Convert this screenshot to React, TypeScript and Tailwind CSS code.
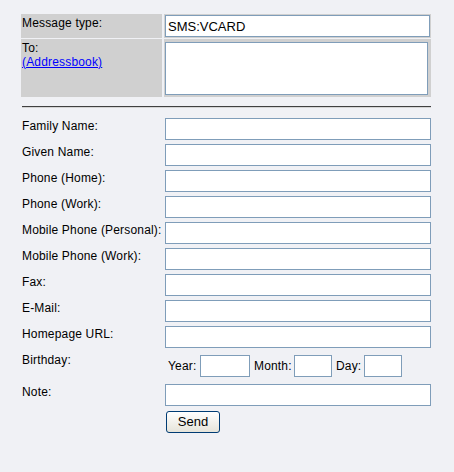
import { useState } from "react"

const fields = [
  "Family Name:",
  "Given Name:",
  "Phone (Home):",
  "Phone (Work):",
  "Mobile Phone (Personal):",
  "Mobile Phone (Work):",
  "Fax:",
  "E-Mail:",
  "Homepage URL:",
]

const inputCls =
  "h-[22px] border border-[#7f9db9] bg-white px-[2px] text-[13px] tracking-normal text-black outline-none"

export default function App() {
  const [values, setValues] = useState<Record<string, string>>({})

  return (
    <div
      className="min-h-screen w-[454px] bg-[#f0f1f5] pl-[21px] pt-[14px] text-[12px] leading-[14px] tracking-[0.17px] text-black"
      style={{ fontFamily: '"Liberation Sans", Arial, sans-serif' }}
    >
      <div className="w-[410px]">
        {/* header table */}
        <div className="flex gap-[2px]">
          <div className="h-[24px] w-[141px] bg-[#d0d0d0] pl-px pt-[2px]">Message type:</div>
          <div className="h-[24px] w-[267px] bg-[#d0d0d0] p-px">
            <input className={`${inputCls} w-[265px]`} defaultValue="SMS:VCARD" />
          </div>
        </div>
        <div className="mt-px flex gap-[2px]">
          <div className="h-[58px] w-[141px] bg-[#d0d0d0] pl-px pt-[2px]">
            <div>To:</div>
            <a href="#" className="text-[#0000ff] underline">
              (Addressbook)
            </a>
          </div>
          <div className="h-[58px] w-[267px] bg-[#d0d0d0] pl-px pt-[3px]">
            <textarea className="block h-[53px] w-[263px] resize-none border border-[#7f9db9] bg-white outline-none" />
          </div>
        </div>

        <div className="mt-[9px] ml-px w-[409px] border-t border-b border-t-[#404040] border-b-[#d4d4d4]" />

        {/* vcard fields */}
        <div className="mt-[10px] flex flex-col gap-[4px]">
          {fields.map((f) => (
            <div key={f} className="flex items-start">
              <div className="w-[144px] pl-px pt-px whitespace-nowrap">{f}</div>
              <input
                className={`${inputCls} w-[266px]`}
                value={values[f] ?? ""}
                onChange={(e) => setValues({ ...values, [f]: e.target.value })}
              />
            </div>
          ))}

          <div className="flex items-start">
            <div className="w-[144px] pl-px pt-px">Birthday:</div>
            <div className="flex items-center pt-[3px]">
              <span className="ml-[3px] w-[29px]">Year:</span>
              <input className={`${inputCls} ml-[3px] w-[50px]`} />
              <span className="ml-[4px] w-[37px]">Month:</span>
              <input className={`${inputCls} ml-[3px] w-[38px]`} />
              <span className="ml-[4px] w-[25px]">Day:</span>
              <input className={`${inputCls} ml-[3px] w-[38px]`} />
            </div>
          </div>

          <div className="mt-[3px] flex items-start">
            <div className="w-[144px] pl-px pt-px">Note:</div>
            <input className={`${inputCls} w-[266px]`} />
          </div>
        </div>

        <div className="mt-[5px] pl-[145px]">
          <button className="h-[22px] w-[54px] rounded-[3px] border border-[#003c74] bg-gradient-to-b from-white to-[#e6e4da] text-[13px] leading-[18px] tracking-normal text-black">
            Send
          </button>
        </div>
      </div>
    </div>
  )
}
